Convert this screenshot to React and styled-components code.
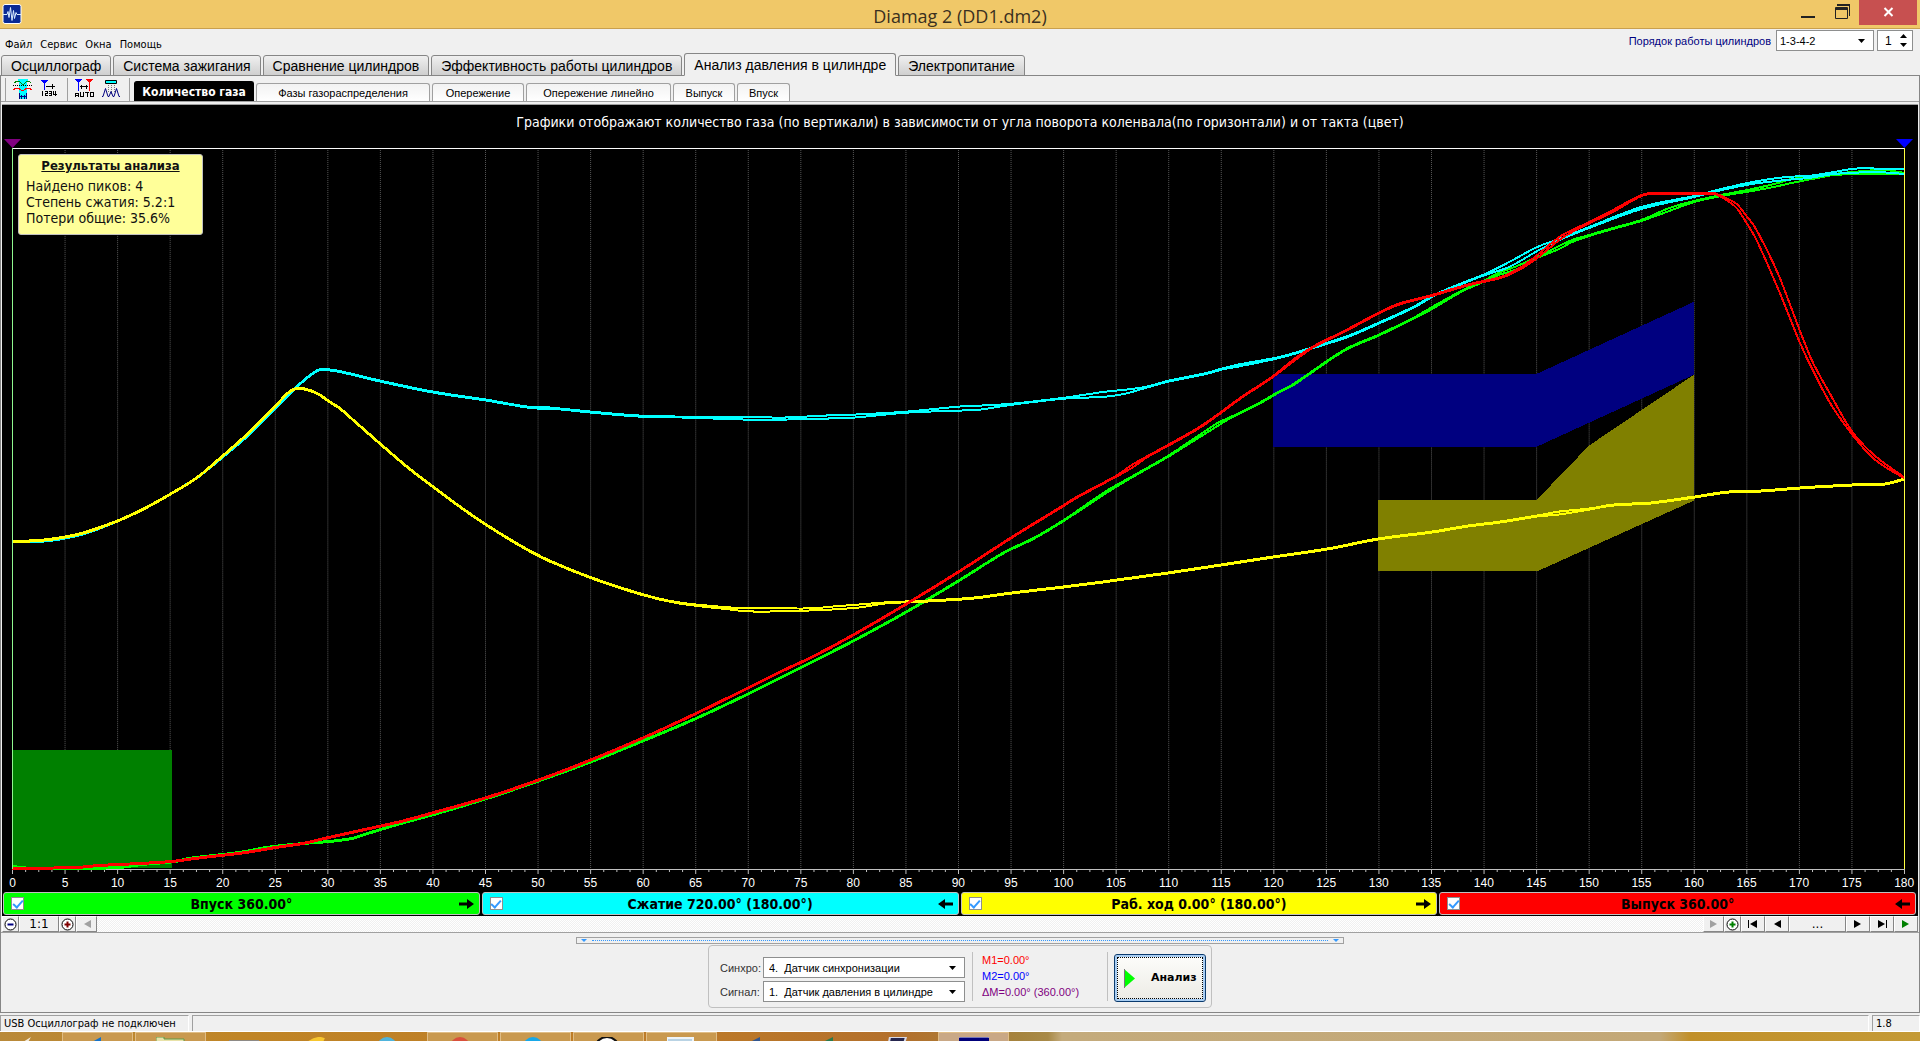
import React from "react";
import styled, { createGlobalStyle, css } from "styled-components";

const SANS = `"Liberation Sans", Arial, sans-serif`;
const TAHOMA = `"DejaVu Sans Condensed", "DejaVu Sans", sans-serif`;
const VERDANA = `"DejaVu Sans", Verdana, sans-serif`;

const Global = createGlobalStyle`
  * { box-sizing: border-box; }
  body { margin: 0; background: #f0f0f0; color: #000; font: 12px/16px ${SANS}; overflow: hidden; }
  button, input, select { font: inherit; color: inherit; margin: 0; }
  svg { display: block; flex: none; }
`;

const Window = styled.div`
  display: flex;
  flex-direction: column;
  height: 100vh;
`;

/* ---- title bar ---- */
const TitleBar = styled.header`
  display: grid;
  grid-template-columns: 1fr auto 1fr;
  height: 29px;
  background: #f0c868;
  border-bottom: 1px solid #c9a04e;
`;
const AppIcon = styled.svg`
  margin: 4px 0 0 2px;
`;
const Title = styled.h1`
  margin: 0;
  padding-top: 4px;
  font: 400 18px/24px "Open Sans", sans-serif;
  color: #3a3020;
`;
const WindowButtons = styled.div`
  display: flex;
  justify-content: flex-end;
  padding-right: 3px;
`;
const WindowButton = styled.button`
  display: flex;
  justify-content: center;
  width: ${(p) => (p.$close ? 58 : 34)}px;
  height: 25px;
  padding: 4px 0 0;
  border: 0;
  background: ${(p) => (p.$close ? "#c75050" : "transparent")};
`;

/* ---- menu ---- */
const MenuBar = styled.div`
  display: flex;
  justify-content: space-between;
  height: 24px;
  padding-right: 7px;
`;
const Menu = styled.nav`
  display: flex;
  gap: 8px;
  padding: 7px 0 0 5px;
`;
const MenuItem = styled.button`
  padding: 0;
  border: 0;
  background: none;
  font: 11px/16px ${TAHOMA};
`;
const OrderBox = styled.div`
  display: flex;
  align-items: center;
  gap: 3px;
  height: 22px;
  padding-top: 1px;
`;
const OrderLabel = styled.label`
  color: #000080;
  font-size: 11px;
  margin-right: 2px;
`;
const Picker = styled.div`
  display: grid;
  grid-template-columns: 1fr 24px;
  align-items: center;
  width: ${(p) => p.$width}px;
  height: 21px;
  background: #fff;
  border: 1px solid #8e8f8f;
  > * { grid-row: 1; }
  > svg { grid-column: 2; justify-self: center; pointer-events: none; }
`;
const Select = styled.select`
  grid-column: 1 / 3;
  width: 100%;
  height: 19px;
  padding: 0 24px 0 ${(p) => p.$indent || 3}px;
  border: 0;
  background: none;
  appearance: none;
  font-size: 11px;
  white-space: pre;
`;
const Spinner = styled.div`
  display: flex;
  align-items: center;
  justify-content: space-between;
  width: 36px;
  height: 21px;
  padding: 0 5px 0 7px;
  background: #fff;
  border: 1px solid #8e8f8f;
`;
const SpinInput = styled.input`
  width: 9px;
  padding: 0;
  border: 0;
  background: none;
`;

/* ---- tabs ---- */
const Tabs = styled.div`
  display: flex;
  align-items: flex-end;
  gap: 2px;
  height: 23px;
  padding-left: 1px;
  box-shadow: inset 0 -1px #868686;
`;
const Tab = styled.button`
  height: ${(p) => (p.$active ? 23 : 21)}px;
  padding: 0 9px;
  border: 1px solid #868686;
  border-bottom-color: ${(p) => (p.$active ? "#f0f0f0" : "#868686")};
  border-radius: 3px 3px 0 0;
  background: ${(p) => (p.$active ? "#f0f0f0" : "linear-gradient(#f0f0f0, #cfcfcf)")};
  font-size: 14px;
  line-height: 18px;
  white-space: nowrap;
`;
const Page = styled.main`
  display: flex;
  flex-direction: column;
  flex: 1;
  min-height: 0;
  border: 1px solid #868686;
  border-top: 0;
`;
const Toolbar = styled.div`
  display: flex;
  height: 26px;
  padding-left: 4px;
  border-bottom: 1px solid #a0a0a0;
`;
const ToolGroup = styled.div`
  display: flex;
  gap: 8px;
  margin-top: 2px;
  padding: 1px 8px 0 7px;
  border-left: 1px solid #a0a0a0;
`;
const Tool = styled.button`
  width: 19px;
  height: 20px;
  padding: 0;
  border: 0;
  background: none;
`;
const SubTabs = styled.div`
  display: flex;
  align-items: flex-end;
  gap: 2px;
  padding-left: 4px;
  border-left: 1px solid #a0a0a0;
  margin-top: 2px;
`;
const SubTab = styled.button`
  width: ${(p) => p.$width}px;
  height: 18px;
  padding: 0;
  border: 1px solid #a0a0a0;
  border-bottom: 0;
  border-radius: 3px 3px 0 0;
  background: linear-gradient(#f2f2f2, #fff);
  font-size: 11px;
  line-height: 16px;
  white-space: nowrap;
  ${(p) =>
    p.$active &&
    css`
      height: 20px;
      border-color: #000;
      background: #000;
      color: #fff;
      font: 700 12px/16px ${TAHOMA};
    `}
`;

/* ---- chart ---- */
const ChartPanel = styled.section`
  display: flex;
  flex-direction: column;
  flex: 1;
  min-height: 0;
  margin: 2px 1px 0;
  border-top: 1px solid #a0a0a0;
  background: #000;
  color: #fff;
`;
const ChartTitle = styled.h2`
  margin: 0;
  height: 34px;
  text-align: center;
  font: 400 14px/34px ${TAHOMA};
`;
const PlotArea = styled.div`
  display: flex;
  flex-direction: column;
  flex: 1;
  min-height: 0;
  margin: 0 13px 0 10px;
`;
const Markers = styled.div`
  display: flex;
  justify-content: space-between;
  height: 9px;
  margin: 0 -8px;
`;
const Plot = styled.div`
  position: relative;
  display: flex;
  flex: 1;
  min-height: 0;
`;
const PlotSvg = styled.svg`
  width: 100%;
  height: 100%;
`;
const Results = styled.aside`
  position: absolute;
  left: 6px;
  top: 6px;
  width: 185px;
  height: 81px;
  padding: 3px 7px;
  background: #ffff99;
  border: 1px solid #c0c0c0;
  border-radius: 3px;
  color: #111;
  font: 14px/16px ${TAHOMA};
`;
const ResultsTitle = styled.h3`
  margin: 0 0 4px;
  text-align: center;
  text-decoration: underline;
  font: 700 13px/16px ${TAHOMA};
`;
const AxisLabels = styled.div`
  display: flex;
  justify-content: space-between;
  height: 17px;
  > span {
    display: flex;
    justify-content: center;
    width: 1px;
    line-height: 16px;
  }
`;
const Strokes = styled.div`
  display: flex;
  gap: 2px;
  padding: 0 2px 1px 1px;
`;
const Stroke = styled.label`
  display: flex;
  align-items: center;
  flex: 1;
  height: 23px;
  padding: 0 5px 0 7px;
  background: ${(p) => p.$color};
  border: 1px solid #c0c0c0;
  border-radius: 3px;
  color: #000;
  font: 700 14px/20px ${TAHOMA};
`;
const StrokeText = styled.span`
  flex: 1;
  text-align: center;
`;
const Check = styled.input`
  display: grid;
  place-items: center;
  width: 13px;
  height: 13px;
  border: 1px solid #8e8f8f;
  background: #fff;
  appearance: none;
  &:checked::after {
    content: "";
    width: 4px;
    height: 8px;
    margin-top: -2px;
    border: solid #3399ff;
    border-width: 0 2px 2px 0;
    transform: rotate(42deg);
  }
`;

/* ---- navigation strip ---- */
const NavBar = styled.div`
  display: flex;
  height: 17px;
  padding: 0 1px;
  border-bottom: 1px solid #a0a0a0;
  background: #f0f0f0;
`;
const NavButton = styled.button`
  display: flex;
  align-items: center;
  justify-content: center;
  width: ${(p) => p.$width}px;
  padding: 0;
  border: 1px solid;
  border-color: #fff #868686 #868686 #fff;
  background: #f0f0f0;
  font: 12px/14px ${VERDANA};
`;
const Track = styled.div`
  flex: 1;
  background: repeating-conic-gradient(#fff 0 25%, #f0f0f0 0 50%) 0 0 / 2px 2px;
`;

/* ---- bottom panel ---- */
const Bottom = styled.section`
  display: flex;
  flex-direction: column;
  align-items: center;
  height: 79px;
  padding-top: 4px;
`;
const Splitter = styled.div`
  display: flex;
  align-items: center;
  justify-content: space-between;
  gap: 5px;
  width: 40%;
  height: 7px;
  padding: 0 4px;
  border: 1px solid #a0a0a0;
  &::before { content: ""; order: 1; flex: 1; border-top: 1px dotted #3399ff; }
  > :last-child { order: 2; }
`;
const Group = styled.div`
  display: flex;
  height: 63px;
  margin-top: 1px;
  padding: 6px 5px 6px 11px;
  border: 1px solid #c0c0c0;
  border-radius: 4px;
`;
const Fields = styled.div`
  display: grid;
  grid-template-columns: 43px auto;
  row-gap: 3px;
  padding: 5px 7px 0 0;
  align-items: center;
  align-content: start;
`;
const FieldLabel = styled.label`
  font-size: 11px;
  color: #333;
`;
const Marks = styled.div`
  width: 136px;
  padding-left: 9px;
  border: solid #c0c0c0;
  border-width: 0 1px;
`;
const Mark = styled.div`
  color: ${(p) => p.$color};
  font-size: 11px;
  line-height: 16px;
`;
const AnalyzeButton = styled.button`
  display: flex;
  align-items: center;
  gap: 16px;
  width: 92px;
  height: 48px;
  margin: 2px 0 0 6px;
  padding: 0 0 0 9px;
  border: 1px solid #0a3a6e;
  border-radius: 3px;
  outline: 1px dotted #000;
  outline-offset: -4px;
  background: linear-gradient(#fdfdfb, #ecebe4);
  box-shadow: inset 0 0 0 2px #a8cdf2;
  font: 700 11px/16px ${VERDANA};
`;

/* ---- status bar and task bar ---- */
const StatusBar = styled.footer`
  display: flex;
  gap: 3px;
  height: 19px;
  padding-top: 2px;
  border-bottom: 1px solid #fff;
`;
const StatusCell = styled.div`
  flex: ${(p) => (p.$width ? `0 0 ${p.$width}px` : "1")};
  padding-left: 3px;
  border: 1px solid #a0a0a0;
  border-right-color: #fff;
  border-bottom: 0;
  font: 11px/16px ${TAHOMA};
`;
const TaskBar = styled.div`
  display: flex;
  gap: 2px;
  height: 9px;
  overflow: hidden;
  background: linear-gradient(90deg, #b98a3a 0, #c08526 240px, #bd7a28 680px, #b3702c 900px, #a5843f 1020px, #a88a48 1048px, #c4ab7c 1062px, #c3a877 1660px, #c1902a 1690px, #c49a36 1920px);
`;
const Task = styled.div`
  width: 71px;
  height: 20px;
  padding-top: 4px;
  display: flex;
  justify-content: center;
  border: ${(p) => (p.$framed ? "1px solid #e0bd86" : "1px solid transparent")};
  background: ${(p) => (p.$active ? "#c9a886" : p.$framed ? "#c9994f" : "none")};
  &:first-child { width: 60px; }
`;

const FIRST_X = 12;
const TOP_Y = 148;
const VIEW_W = 1893;
const VIEW_H = 728;
const AXIS_Y = 870;
const degX = (deg) => FIRST_X + 0.5 + (deg * 1892) / 180;

/* Each sample is [x, y of the first cycle, y of the second cycle]. */
const INTAKE = [[12,867],[33,869],[75,869],[118,868],[141,865],[175,862],[188,859],[222,855],[245,852],[265,848],[302,844],[328,842],[351,839],[367,834],[400,824],[433,815],[486,799],[539,781],[591,762],[643,741],[695,719],[748,694],[800,668],[853,641],[906,612],[958,581],[1003,553],[1034,538],[1064,520],[1105,492,494],[1133,476],[1168,456],[1216,424,427],[1231,417],[1259,403],[1280,391],[1292,385],[1344,350],[1378,335],[1413,318],[1432,307,309],[1461,291],[1483,281],[1496,274,276],[1517,266,269],[1537,257],[1559,246,249],[1572,240,242],[1589,235],[1613,228],[1641,220],[1669,208,211],[1694,201],[1721,195],[1752,189,191],[1778,183,186],[1791,179,183],[1817,177,178],[1834,174,175],[1864,171,174],[1884,170,174],[1904,173,174]];
const COMPRESSION = [[12,542],[44,541],[65,538],[86,533],[117,521],[143,509],[170,494],[196,478],[222,457],[249,434],[275,408],[294,389],[306,378],[318,370],[331,370],[351,374],[380,381],[433,392],[486,400],[527,407],[539,407,409],[551,408,409],[591,412],[640,416],[687,417],[747,417,420],[780,418,420],[823,416,419],[853,415,418],[906,412],[958,407,411],[979,406,410],[1012,404],[1064,398],[1105,392,397],[1125,390,394],[1146,387],[1168,381],[1207,373],[1221,369],[1237,365,367],[1280,357],[1314,347],[1348,336],[1378,323],[1413,307],[1432,296],[1457,285],[1485,274],[1509,262,267],[1537,247,251],[1559,239],[1589,227],[1641,207,209],[1694,196],[1717,190],[1752,182,184],[1786,177,180],[1808,176,178],[1834,172,174],[1851,169,173],[1869,168,172],[1877,169,172],[1904,169,174]];
const POWER = [[12,542],[44,540],[65,537],[86,532],[117,521],[143,509],[170,494],[196,478],[222,456],[249,432],[275,406],[286,394],[294,389],[305,389],[318,394],[328,401],[339,408],[355,422],[380,444],[408,468],[433,487],[457,505],[486,525],[522,547],[549,561],[591,578],[643,595],[678,603],[728,608,610],[747,609,612],[780,609,612],[812,609,611],[834,607,610],[860,605,608],[886,603,604],[930,601],[975,598],[1012,593],[1064,587],[1103,582],[1168,573],[1221,565],[1273,557],[1327,549],[1378,539],[1432,532],[1468,526],[1500,522],[1537,516],[1559,512,515],[1589,509],[1613,505],[1650,503],[1694,497],[1728,492],[1760,491],[1799,488],[1851,485],[1884,484],[1904,479]];
const EXHAUST = [[12,869],[75,868],[98,866],[139,864],[171,862],[202,858],[245,853],[275,848],[302,844],[328,838],[355,832],[400,822],[433,813],[486,798],[539,780],[591,760],[643,738],[695,714],[748,688],[780,672],[812,657],[853,635],[906,604],[958,572],[1012,537],[1064,505],[1075,498],[1116,476],[1132,465,468],[1146,457],[1168,445],[1198,428],[1221,412],[1240,398],[1273,376],[1294,359,361],[1314,346],[1344,331],[1378,313],[1398,304],[1432,295],[1470,284],[1504,276],[1524,265,267],[1537,255,258],[1559,237,240],[1572,230,232],[1589,222],[1609,212,214],[1641,195],[1654,193],[1694,193],[1713,193],[1721,196],[1736,204,208],[1746,216,223],[1756,230,240],[1778,275,290],[1799,330,342],[1812,362,370],[1830,395,404],[1851,431,434],[1873,455,459],[1904,478,479]];

const SERIES = [
  { color: "#00ff00", data: INTAKE },
  { color: "#00ffff", data: COMPRESSION },
  { color: "#ffff00", data: POWER },
  { color: "#ff0000", data: EXHAUST },
];

/* Joins the samples by a cubic whose slope at each one is that of its neighbours. */
const toPath = (data, cycle) => {
  const pts = data.map(([x, a, b]) => [x + 0.5, cycle ? b ?? a + 1 : a]);
  const slope = pts.map((p, i) => {
    const prev = pts[Math.max(0, i - 1)];
    const next = pts[Math.min(pts.length - 1, i + 1)];
    return (next[1] - prev[1]) / (next[0] - prev[0]);
  });
  return pts.reduce((d, [x, y], i) => {
    if (!i) return `M${x} ${y}`;
    const [px, py] = pts[i - 1];
    const h = (x - px) / 3;
    return `${d}C${px + h} ${py + slope[i - 1] * h} ${x - h} ${y - slope[i] * h} ${x} ${y}`;
  }, "");
};

function Curves() {
  const grid = Array.from({ length: 35 }, (_, i) => degX((i + 1) * 5));
  const ticks = Array.from({ length: 145 }, (_, i) => i);
  return (
    <PlotSvg viewBox={`${FIRST_X} ${TOP_Y} ${VIEW_W} ${VIEW_H}`} preserveAspectRatio="none" shapeRendering="crispEdges">
      {grid.map((x) => (
        <line key={x} x1={x} x2={x} y1={TOP_Y} y2={AXIS_Y} stroke="#585858" strokeDasharray="1 1" />
      ))}
      <rect x="12" y="751" width="160" height="118" fill="#008000" />
      <polygon points="1273,374 1537,374 1694,302 1694,375 1537,447 1273,447" fill="#000080" />
      <polygon points="1378,500 1537,500 1589,446 1694,375 1694,501 1537,572 1378,572" fill="#808000" />
      <path d={`M12 ${AXIS_Y + 0.5}H1905`} stroke="#c0c0c0" />
      {ticks.map((i) => (
        <line key={i} x1={degX(i * 1.25)} x2={degX(i * 1.25)} y1={AXIS_Y} y2={i % 4 ? 873 : 875} stroke="#c0c0c0" />
      ))}
      <path d="M12 148.5H1905" stroke="#fff" />
      {SERIES.map((s) => (
        <g key={s.color} fill="none" stroke={s.color} strokeWidth="2">
          <path d={toPath(s.data, 0)} />
          <path d={toPath(s.data, 1)} />
        </g>
      ))}
      <path d={`M12.5 148V${AXIS_Y}`} stroke="#90f890" />
      <path d={`M1904.5 148V${AXIS_Y}`} stroke="#ffff40" />
    </PlotSvg>
  );
}

const Caret = () => (
  <svg width="7" height="4"><path d="M0 0h7L3.5 4z" fill="#000" /></svg>
);
const Arrow = ({ left }) => (
  <svg width="15" height="10" viewBox="0 0 15 10">
    <path d={left ? "M0 5L7 0v3.500h8v3H7V10z" : "M15 5L8 0v3.500H0v3h8V10z"} fill="#000" />
  </svg>
);
const Zoom = ({ color, minus }) => (
  <svg width="13" height="13" viewBox="0 0 13 13">
    <circle cx="6.5" cy="6.5" r="5.5" fill="#fff" stroke="#000" />
    <path d={minus ? "M3.5 6.5h6" : "M3.5 6.5h6M6.5 3.5v6"} stroke={color} strokeWidth="2" />
  </svg>
);
const Play = ({ color = "#000", left, bar }) => (
  <svg width="12" height="8" viewBox="0 0 12 8" fill={color}>
    <path d={left ? "M10 0v8L3 4z" : "M2 0v8l7-4z"} />
    {bar && <path d={left ? "M1 0h1v8H1z" : "M10 0h1v8h-1z"} />}
  </svg>
);

const TABS = ["Осциллограф", "Система зажигания", "Сравнение цилиндров", "Эффективность работы цилиндров", "Анализ давления в цилиндре", "Электропитание"];
const SUB_TABS = [
  ["Количество газа", 120], ["Фазы газораспределения", 174], ["Опережение", 92],
  ["Опережение линейно", 145], ["Выпуск", 62], ["Впуск", 53],
];
const STROKES = [
  ["Впуск 360.00°", "#00ff00", false], ["Сжатие 720.00° (180.00°)", "#00ffff", true],
  ["Раб. ход 0.00° (180.00°)", "#ffff00", false], ["Выпуск 360.00°", "#ff0000", true],
];
const TASKS = [
  { icon: <path d="M16 0L0 10h10z" fill="#f4ead8" /> },
  { framed: true, icon: <path d="M18 0L0 10h18z" fill="#1572c8" /> },
  { framed: true, icon: <path d="M0 0h8v2h20v8H0z" fill="#e8e2a8" stroke="#5f9a48" /> },
  { icon: <path d="M0 3h34v6H0z" fill="#8d8a86" /> },
  { icon: <path d="M2 10Q14 -1 22 3" fill="none" stroke="#f7c62e" strokeWidth="4" /> },
  { icon: <circle cx="12" cy="10" r="10" fill="#4fb4dc" /> },
  { framed: true, icon: <circle cx="12" cy="10" r="10" fill="#d9503c" /> },
  { framed: true, icon: <circle cx="12" cy="10" r="10" fill="#18a8e8" /> },
  { framed: true, icon: <circle cx="13" cy="12" r="12" fill="#fff" stroke="#101010" strokeWidth="2" /> },
  { framed: true, icon: <path d="M0 1h26v9H0z" fill="#b9d3e4" stroke="#eef4f8" strokeWidth="2" /> },
  { icon: <path d="M20 0L0 10h20z" fill="#31568f" /> },
  { icon: <path d="M20 0L0 10h20z" fill="#2a7a4c" /> },
  { icon: <path d="M4 0h16l-3 10H2z" fill="#26264e" stroke="#d8d8e4" strokeWidth="2" /> },
  { framed: true, active: true, icon: <rect x="-4" y="0" width="38" height="20" rx="5" fill="#00007a" stroke="#f0f0f8" /> },
];

export default function App() {
  return (
    <Window>
      <Global />
      <TitleBar>
        <AppIcon width="20" height="20" viewBox="0 0 20 20">
          <rect x="1" y="0.5" width="18" height="19" rx="2" fill="#0a2a94" stroke="#fff" />
          <path d="M1 10.5h4l1-3 1 6 1.500-10 1.500 13 1.500-10 1 8 1.500-6 1 2h4" fill="none" stroke="#d8ecff" />
        </AppIcon>
        <Title>Diamag 2 (DD1.dm2)</Title>
        <WindowButtons>
          <WindowButton aria-label="Свернуть">
            <svg width="14" height="14"><path d="M0 13h14" stroke="#222" strokeWidth="2" /></svg>
          </WindowButton>
          <WindowButton aria-label="Восстановить">
            <svg width="15" height="15" fill="none" stroke="#222">
              <path d="M0.500 3.500h12v11h-12z" /><path d="M0 5h13M2 1h13" strokeWidth="2" /><path d="M14.500 0v12" />
            </svg>
          </WindowButton>
          <WindowButton $close aria-label="Закрыть">
            <svg width="11" height="14"><path d="M1.500 4l8 8M9.500 4l-8 8" stroke="#fff" strokeWidth="2" /></svg>
          </WindowButton>
        </WindowButtons>
      </TitleBar>

      <MenuBar>
        <Menu>
          {["Файл", "Сервис", "Окна", "Помощь"].map((m) => <MenuItem key={m}>{m}</MenuItem>)}
        </Menu>
        <OrderBox>
          <OrderLabel htmlFor="order">Порядок работы цилиндров</OrderLabel>
          <Picker $width={98}>
            <Select id="order"><option>1-3-4-2</option></Select>
            <Caret />
          </Picker>
          <Spinner>
            <SpinInput aria-label="Номер цилиндра" defaultValue="1" />
            <svg width="7" height="13"><path d="M0 4h7L3.500 0zM0 9h7l-3.500 4z" fill="#000" /></svg>
          </Spinner>
        </OrderBox>
      </MenuBar>

      <Tabs>
        {TABS.map((t, i) => <Tab key={t} $active={i === 4}>{t}</Tab>)}
      </Tabs>

      <Page>
        <Toolbar>
          <ToolGroup>
            <Tool aria-label="Фазы">
              <svg width="19" height="20" fill="none" shapeRendering="crispEdges">
                <path d="M5 0h10l-1 6v14H6V6z" fill="#00ffff" />
                <path d="M1 4l3-2h2l3 3h2l3-3h2l2 2" stroke="#008000" />
                <path d="M0 6.500h19" stroke="#000" strokeDasharray="1 1" />
                <path d="M0 11l3-2h2l3 2h3l3-2h2l3 2" stroke="#ff0000" />
                <path d="M6.500 14v6M13.500 14v6M7 17.500h6M8.500 15.500v4M11.500 15.500v4" stroke="#000080" />
              </svg>
            </Tool>
            <Tool aria-label="Порядок">
              <svg width="19" height="20" fill="none" shapeRendering="crispEdges">
                <path d="M1 1h7L4.500 5z" fill="#0000ff" /><path d="M4.500 4v7" stroke="#0000ff" />
                <path d="M6 7.500h9M12.500 5v5" stroke="#000" />
                <path d="M2.500 12v5M5 12.500h2.500v2H5.500v2H8M9 12.500h2.500v4H9M9 14.500h2M13.500 12v3h3M15.500 12v5" stroke="#000" />
              </svg>
            </Tool>
          </ToolGroup>
          <ToolGroup>
            <Tool aria-label="Авто">
              <svg width="19" height="20" fill="none" shapeRendering="crispEdges">
                <path d="M0 0h7L3.500 4z" fill="#0000ff" /><path d="M3.500 3v9" stroke="#0000ff" />
                <path d="M11 0h7l-3.500 4z" fill="#ff0000" /><path d="M14.500 3v9" stroke="#ff0000" />
                <path d="M5 7.500h8M6.500 5.500v4M11.500 5.500v4" stroke="#000" />
                <path d="M0.500 18v-4h3v4M1 16.500h3M5.500 13v4.500h3V13M10 13.500h4M12.500 13v5M15.500 13.500h3v4h-3z" stroke="#000" />
              </svg>
            </Tool>
            <Tool aria-label="Пики">
              <svg width="19" height="20" fill="none">
                <path d="M3.500 1.500h11v3h-11z" fill="#00ffff" stroke="#000" />
                <path d="M6.500 6v8M9.500 6v10M12.500 6v8" stroke="#777" strokeDasharray="1 1" />
                <path d="M0 17.500h1l2.500-8 2.500 8h1l2-5 2 5h1l2.500-8 2.500 8h1" stroke="#000080" />
              </svg>
            </Tool>
          </ToolGroup>
          <SubTabs>
            {SUB_TABS.map(([t, w], i) => <SubTab key={t} $width={w} $active={i === 0}>{t}</SubTab>)}
          </SubTabs>
        </Toolbar>

        <ChartPanel>
          <ChartTitle>Графики отображают количество газа (по вертикали) в зависимости от угла поворота коленвала(по горизонтали) и от такта (цвет)</ChartTitle>
          <PlotArea>
            <Markers>
              <svg width="17" height="9"><path d="M0 0h17L8.500 9z" fill="#800080" /></svg>
              <svg width="17" height="9"><path d="M0 0h17L8.500 9z" fill="#0000ff" /></svg>
            </Markers>
            <Plot>
              <Curves />
              <Results>
                <ResultsTitle>Результаты анализа</ResultsTitle>
                <div>Найдено пиков: 4</div>
                <div>Степень сжатия: 5.2:1</div>
                <div>Потери общие: 35.6%</div>
              </Results>
            </Plot>
            <AxisLabels>
              {Array.from({ length: 37 }, (_, i) => <span key={i}>{i * 5}</span>)}
            </AxisLabels>
          </PlotArea>
          <Strokes>
            {STROKES.map(([t, c, left]) => (
              <Stroke key={t} $color={c}>
                <Check type="checkbox" defaultChecked />
                <StrokeText>{t}</StrokeText>
                <Arrow left={left} />
              </Stroke>
            ))}
          </Strokes>
        </ChartPanel>

        <NavBar>
          <NavButton $width={17} aria-label="Уменьшить"><Zoom color="#000080" minus /></NavButton>
          <NavButton $width={40}>1:1</NavButton>
          <NavButton $width={17} aria-label="Увеличить"><Zoom color="#800000" /></NavButton>
          <NavButton $width={21} aria-label="Влево"><Play color="#a0a0a0" left /></NavButton>
          <Track />
          <NavButton $width={21} aria-label="Вправо"><Play color="#a0a0a0" /></NavButton>
          <NavButton $width={17} aria-label="Добавить"><Zoom color="#008000" /></NavButton>
          <NavButton $width={24} aria-label="Первый"><Play left bar /></NavButton>
          <NavButton $width={24} aria-label="Предыдущий"><Play left /></NavButton>
          <NavButton $width={57}>...</NavButton>
          <NavButton $width={24} aria-label="Следующий"><Play /></NavButton>
          <NavButton $width={24} aria-label="Последний"><Play bar /></NavButton>
          <NavButton $width={24} aria-label="Пуск"><Play color="#008000" /></NavButton>
        </NavBar>

        <Bottom>
          <Splitter>
            <svg width="6" height="3"><path d="M0 0h6L3 3z" fill="#3399ff" /></svg>
            <svg width="6" height="3"><path d="M0 0h6L3 3z" fill="#3399ff" /></svg>
          </Splitter>
          <Group>
            <Fields>
              <FieldLabel htmlFor="sync">Синхро:</FieldLabel>
              <Picker $width={202}>
                <Select id="sync" $indent={5}><option>{"4.\u00a0 Датчик синхронизации"}</option></Select>
                <Caret />
              </Picker>
              <FieldLabel htmlFor="signal">Сигнал:</FieldLabel>
              <Picker $width={202}>
                <Select id="signal" $indent={5}><option>{"1.\u00a0 Датчик давления в цилиндре"}</option></Select>
                <Caret />
              </Picker>
            </Fields>
            <Marks>
              <Mark $color="#ff0000">M1=0.00°</Mark>
              <Mark $color="#0000ff">M2=0.00°</Mark>
              <Mark $color="#800080">ΔM=0.00° (360.00°)</Mark>
            </Marks>
            <AnalyzeButton>
              <svg width="11" height="19"><path d="M0 0l11 9.500L0 19z" fill="#00ff00" /><path d="M0.500 0v19" stroke="#777" /></svg>
              Анализ
            </AnalyzeButton>
          </Group>
        </Bottom>
      </Page>

      <StatusBar>
        <StatusCell $width={189}>USB Осциллограф не подключен</StatusCell>
        <StatusCell />
        <StatusCell $width={48}>1.8</StatusCell>
      </StatusBar>
      <TaskBar>
        {TASKS.map((t, i) => (
          <Task key={i} $framed={t.framed} $active={t.active}>
            <svg width="30" height="12">{t.icon}</svg>
          </Task>
        ))}
      </TaskBar>
    </Window>
  );
}
